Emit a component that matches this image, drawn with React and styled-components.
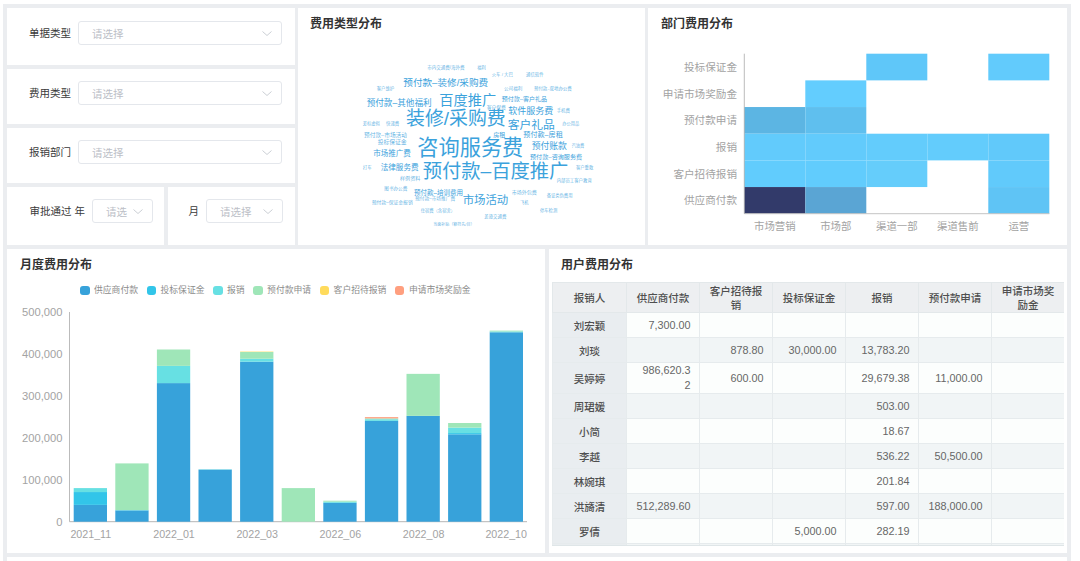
import React from 'react';
import styled, { createGlobalStyle } from 'styled-components';

const Global = createGlobalStyle`
  html, body { margin: 0; padding: 0; background: #fff; height: 561px; overflow: hidden; }
  body { font-family: "Liberation Sans", "Noto Sans CJK SC", sans-serif; }
`;

const Board = styled.div`
  margin: 4px 9px 0 3px;
  padding: 4px 4px 0;
  background: #ebedf0;
  height: 557px;
  box-sizing: border-box;
  display: flex;
  flex-direction: column;
  gap: 4px;
  overflow: hidden;
`;
const TopRow = styled.div`
  display: grid;
  grid-template-columns: 288px 347px 419px;
  gap: 3px;
  height: 237px;
  flex: none;
`;
const BottomRow = styled.div`
  display: grid;
  grid-template-columns: 538px 518px;
  gap: 4px;
  height: 304px;
  flex: none;
`;
const Filters = styled.div`
  display: grid;
  grid-template-rows: 57px 55px 55px 58px;
  gap: 4px;
`;
const SplitFilter = styled.div`
  display: grid;
  grid-template-columns: 157px 127px;
  gap: 4px;
`;
const FilterCard = styled.div`
  background: #fff;
  display: flex;
  align-items: flex-start;
  gap: 7px;
  padding: ${p => p.$top}px ${p => p.$right}px 0 ${p => p.$left}px;
  justify-content: ${p => (p.$end ? 'flex-end' : 'flex-start')};
`;
const FilterLabel = styled.span`
  font-size: 10.5px;
  line-height: 24px;
  color: #3a3a3a;
  white-space: nowrap;
`;
const Select = styled.div`
  flex: ${p => (p.$width ? 'none' : '1')};
  width: ${p => (p.$width ? `${p.$width}px` : 'auto')};
  height: 24px;
  box-sizing: border-box;
  border: 1px solid #e4e7ec;
  border-radius: 3px;
  background: #fff;
  display: flex;
  align-items: center;
  justify-content: space-between;
  padding: 0 9px 0 13px;
`;
const Placeholder = styled.span`
  font-size: 10.5px;
  color: #bcc0c7;
  white-space: nowrap;
`;
const Chevron = () => (
  <svg width="10" height="5" viewBox="0 0 10 5" fill="none">
    <polyline points="0.5,0.5 5,4.5 9.5,0.5" stroke="#c4c8cf" strokeWidth="0.9" />
  </svg>
);
const Panel = styled.section`
  background: #fff;
  padding-top: 8px;
  overflow: hidden;
`;
const Title = styled.h3`
  margin: 0;
  padding-left: ${p => p.$left || 13}px;
  font-size: 12px;
  line-height: 16px;
  font-weight: 700;
  color: #333;
`;
const Chart = styled.svg`
  display: block;
  font-family: "Liberation Sans", "Noto Sans CJK SC", sans-serif;
`;
const CloudSvg = styled(Chart)`
  margin-top: 7px;
`;
const Legend = styled.ul`
  list-style: none;
  margin: 11px 0 0;
  padding: 0 0 0 73px;
  display: flex;
  gap: 8.5px;
  height: 12px;
`;
const LegendItem = styled.li`
  display: flex;
  align-items: center;
  gap: 4.5px;
  font-size: 8.8px;
  line-height: 12px;
  color: #8c8c8c;
  white-space: nowrap;
`;
const Swatch = styled.i`
  width: 9.5px;
  height: 9px;
  border-radius: 3px;
  background: ${p => p.$color};
`;
const TableWrap = styled.div`
  margin: 9px 3px 0;
  width: 512px;
  height: 263px;
  overflow: hidden;
  border-bottom: 1px solid #dfe6e8;
`;
const Table = styled.table`
  border-collapse: collapse;
  table-layout: fixed;
  width: 512px;
  font-size: 10.5px;
  color: #666;
`;
const Col = styled.col`
  width: ${p => p.$w}px;
`;
const Th = styled.th`
  background: #edeff1;
  border: 1px solid #e3e8ea;
  height: 30px;
  padding: 0 8px;
  box-sizing: border-box;
  font-size: 10.5px;
  line-height: 14px;
  font-weight: 500;
  color: #4f4f4f;
  text-align: center;
`;
const Row = styled.tr`
  background: ${p => (p.$even ? '#f1f5f6' : '#fcfefd')};
`;
const Name = styled.td`
  background: #e9edf0;
  border: 1px solid #e6ebed;
  height: ${p => (p.$tall ? 30 : 25)}px;
  padding: 0;
  box-sizing: border-box;
  text-align: center;
  font-weight: 500;
  color: #4f4f4f;
`;
const Cell = styled.td`
  border: 1px solid #e6ebed;
  padding: 0 8.5px 0 2px;
  box-sizing: border-box;
  text-align: right;
  line-height: 15px;
  white-space: pre-line;
  font-size: 10.8px;
  color: #666;
`;
const NextPanel = styled.div`
  background: #fff;
  flex: 1;
`;

const words = [
  ['市内交通费/海外费', 262, 48, 4.5], ['福利', 412, 48, 4.3], ['火车 / 大巴', 455, 70, 4.4], ['通信软件', 558, 70, 4.4],
  ['预付款–装修/采购费', 190, 93, 9.6], ['客户维护', 110, 113, 4.4], ['公司福利', 492, 113, 4.6], ['预付款–双地办公费', 582, 113, 4.4],
  ['百度推广', 298, 148, 14.2], ['预付款–客户礼品', 485, 145, 6], ['预付款–其他福利', 80, 157, 8.6], ['客户保费', 440, 169, 4.8],
  ['装修/采购费', 198, 203, 18.9], ['软件服务费', 505, 180, 9], ['手机费', 650, 177, 4.4], ['客户礼品', 503, 222, 11.8],
  ['办公用品', 667, 218, 4.2], ['差标虚拟', 68, 218, 4.3], ['快递费', 138, 218, 4.4], ['预付款–市场活动', 72, 252, 5.7],
  ['房租', 460, 252, 6], ['预付款–房租', 550, 251, 7.1], ['投标保证金', 113, 272, 5.8], ['咨询服务费', 232, 288, 21.2],
  ['预付账款', 575, 285, 8.8], ['汽油费', 695, 284, 4.2], ['市场推广费', 100, 306, 7.5], ['预付款–咨询服务费', 570, 316, 6.1],
  ['打车', 68, 348, 4.5], ['法律服务费', 122, 348, 7.6], ['预付款–百度推广', 248, 362, 19.3], ['客户重散', 708, 348, 4.3],
  ['样例资料', 180, 380, 5.1], ['内部员工客户教育', 650, 389, 4.4], ['图书办公费', 133, 411, 4.6], ['预付款–培训费用', 222, 423, 6.5],
  ['市场外包费', 515, 422, 5], ['备证类伪费用', 620, 433, 4.3], ['预付款–市场推广费', 225, 443, 4.7], ['市场活动', 368, 446, 11.4],
  ['预付款–保证金报销', 95, 453, 4.8], ['飞机', 540, 453, 4.2], ['住宿费（含宿舍）', 242, 477, 4.3], ['停车检测', 600, 477, 4.3],
  ['差旅交通费', 433, 497, 4.4], ['当面补贴（额符先/目）', 280, 519, 4],
];

const WordCloud = () => (
  <CloudSvg width="347" height="198" viewBox="298 38 347 198">
    {words.map(([t, x, y, s]) => (
      <text key={t} x={340 + x / 3} y={50 + y / 3} fontSize={s} fill="#3ba2dc" fillOpacity={s < 6 ? 0.8 : 1} dominantBaseline="central">
        {t}
      </text>
    ))}
  </CloudSvg>
);

const heatY = ['投标保证金', '申请市场奖励金', '预付款申请', '报销', '客户招待报销', '供应商付款'];
const heatX = ['市场营销', '市场部', '渠道一部', '渠道售前', '运营'];
const heat = [
  [null, null, '#5fc7f9', null, '#62cbfc'],
  [null, '#63cdfe', null, null, null],
  ['#5cb5e3', '#5fbfee', null, null, null],
  ['#62cbfc', '#62cbfc', '#63ccfc', '#63ccfc', '#61c9fa'],
  ['#61ccfd', '#61ccfd', '#65cdfb', null, '#61cafb'],
  ['#323a6a', '#5aa5d4', null, null, '#5fc4f5'],
];
const HX = 744.3, HY = 53.7, CW = 61, CH = 26.67;

const Heatmap = () => (
  <Chart width="419" height="212" viewBox="648 32 419 212">
    {heat.map((row, r) => row.map((c, i) => c && (
      <rect key={`${r}-${i}`} x={HX + i * CW} y={HY + r * CH} width={CW} height={CH} fill={c} />
    )))}
    <line x1={HX} y1={HY} x2={HX} y2={HY + 160} stroke="#aaa" strokeWidth="0.8" />
    <line x1={HX} y1={HY + 160} x2={HX + 305} y2={HY + 160} stroke="#c4c4c4" strokeWidth="1" />
    {heatY.map((t, r) => (
      <text key={t} x="737" y={HY + (r + 0.5) * CH} fontSize="10.6" fill="#a3a3a3" textAnchor="end" dominantBaseline="central">{t}</text>
    ))}
    {heatX.map((t, i) => (
      <text key={t} x={HX + (i + 0.5) * CW} y="226.5" fontSize="10.4" fill="#a3a3a3" textAnchor="middle" dominantBaseline="central">{t}</text>
    ))}
  </Chart>
);

const series = [
  { name: '供应商付款', color: '#37a2da' },
  { name: '投标保证金', color: '#32c5e9' },
  { name: '报销', color: '#67e0e3' },
  { name: '预付款申请', color: '#9fe6b8' },
  { name: '客户招待报销', color: '#ffdb5c' },
  { name: '申请市场奖励金', color: '#ff9f7f' },
];
const months = [
  [40000, 30600, 9400, 0, 0, 0],
  [27000, 0, 800, 111000, 0, 0],
  [330000, 0, 41000, 39000, 0, 0],
  [124000, 0, 800, 0, 0, 0],
  [381000, 0, 7000, 16000, 1000, 0],
  [0, 0, 0, 80000, 0, 0],
  [45000, 0, 2600, 2400, 0, 0],
  [240000, 0, 4000, 2000, 0, 3000],
  [252000, 0, 0, 100000, 0, 0],
  [208000, 3000, 13000, 11000, 0, 0],
  [451000, 0, 2000, 2000, 0, 0],
];
const AX = 69.5, AY = 521.7, SCALE = 210 / 500000, STEP = 41.6, BW = 33.3;
const ticks = [0, 100000, 200000, 300000, 400000, 500000];
const xLabels = [[0, '2021_11'], [2, '2022_01'], [4, '2022_03'], [6, '2022_06'], [8, '2022_08']];

const Bars = () => (
  <Chart width="538" height="258" viewBox="7 296 538 258">
    <line x1={AX} y1="312" x2={AX} y2={AY} stroke="#aaa" strokeWidth="0.8" />
    <line x1={AX} y1={AY} x2="527" y2={AY} stroke="#b5b5b5" strokeWidth="1" />
    {ticks.map(v => (
      <text key={v} x="62.5" y={AY - v * SCALE} fontSize="11.2" fill="#a3a3a3" textAnchor="end" dominantBaseline="central">
        {v.toLocaleString('en-US')}
      </text>
    ))}
    {months.map((m, i) => {
      let acc = 0;
      return m.map((v, s) => {
        if (!v) return null;
        const h = v * SCALE;
        acc += h;
        return <rect key={`${i}-${s}`} x={73.7 + i * STEP} y={AY - acc} width={BW} height={h} fill={series[s].color} />;
      });
    })}
    {xLabels.map(([i, t]) => (
      <text key={t} x={90.8 + i * STEP} y="534" fontSize="10.7" fill="#a3a3a3" textAnchor="middle" dominantBaseline="central">{t}</text>
    ))}
    <text x="527" y="534" fontSize="10.7" fill="#a3a3a3" textAnchor="end" dominantBaseline="central">2022_10</text>
  </Chart>
);

const columns = ['报销人', '供应商付款', '客户招待报销', '投标保证金', '报销', '预付款申请', '申请市场奖励金'];
const rows = [
  ['刘宏颖', '7,300.00', '', '', '', '', ''],
  ['刘琰', '', '878.80', '30,000.00', '13,783.20', '', ''],
  ['吴婷婷', '986,620.3\n2', '600.00', '', '29,679.38', '11,000.00', ''],
  ['周珺媛', '', '', '', '503.00', '', ''],
  ['小简', '', '', '', '18.67', '', ''],
  ['李越', '', '', '', '536.22', '50,500.00', ''],
  ['林婉琪', '', '', '', '201.84', '', ''],
  ['洪旖清', '512,289.60', '', '', '597.00', '188,000.00', ''],
  ['罗倩', '', '', '5,000.00', '282.19', '', ''],
  ['', '', '', '', '', '', ''],
];

const Filter = ({ label, top }) => (
  <FilterCard $top={top} $left={22} $right={13}>
    <FilterLabel>{label}</FilterLabel>
    <Select><Placeholder>请选择</Placeholder><Chevron /></Select>
  </FilterCard>
);

export default function App() {
  return (
    <>
      <Global />
      <Board>
        <TopRow>
          <Filters>
            <Filter label="单据类型" top={13} />
            <Filter label="费用类型" top={12} />
            <Filter label="报销部门" top={12} />
            <SplitFilter>
              <FilterCard $top={12} $left={10} $right={11} $end>
                <FilterLabel>审批通过 年</FilterLabel>
                <Select $width={61}><Placeholder>请选</Placeholder><Chevron /></Select>
              </FilterCard>
              <FilterCard $top={12} $left={10} $right={12} $end>
                <FilterLabel>月</FilterLabel>
                <Select $width={77}><Placeholder>请选择</Placeholder><Chevron /></Select>
              </FilterCard>
            </SplitFilter>
          </Filters>
          <Panel>
            <Title $left={12}>费用类型分布</Title>
            <WordCloud />
          </Panel>
          <Panel>
            <Title>部门费用分布</Title>
            <Heatmap />
          </Panel>
        </TopRow>
        <BottomRow>
          <Panel>
            <Title>月度费用分布</Title>
            <Legend>
              {series.map(s => (
                <LegendItem key={s.name}><Swatch $color={s.color} />{s.name}</LegendItem>
              ))}
            </Legend>
            <Bars />
          </Panel>
          <Panel>
            <Title $left={12}>用户费用分布</Title>
            <TableWrap>
              <Table>
                <colgroup>
                  <Col $w={74} />
                  {columns.slice(1).map(c => <Col key={c} $w={73} />)}
                </colgroup>
                <thead>
                  <tr>{columns.map(c => <Th key={c}>{c}</Th>)}</tr>
                </thead>
                <tbody>
                  {rows.map((r, i) => (
                    <Row key={i} $even={i % 2 === 1}>
                      <Name $tall={i === 2}>{r[0]}</Name>
                      {r.slice(1).map((c, j) => <Cell key={j}>{c}</Cell>)}
                    </Row>
                  ))}
                </tbody>
              </Table>
            </TableWrap>
          </Panel>
        </BottomRow>
        <NextPanel />
      </Board>
    </>
  );
}
